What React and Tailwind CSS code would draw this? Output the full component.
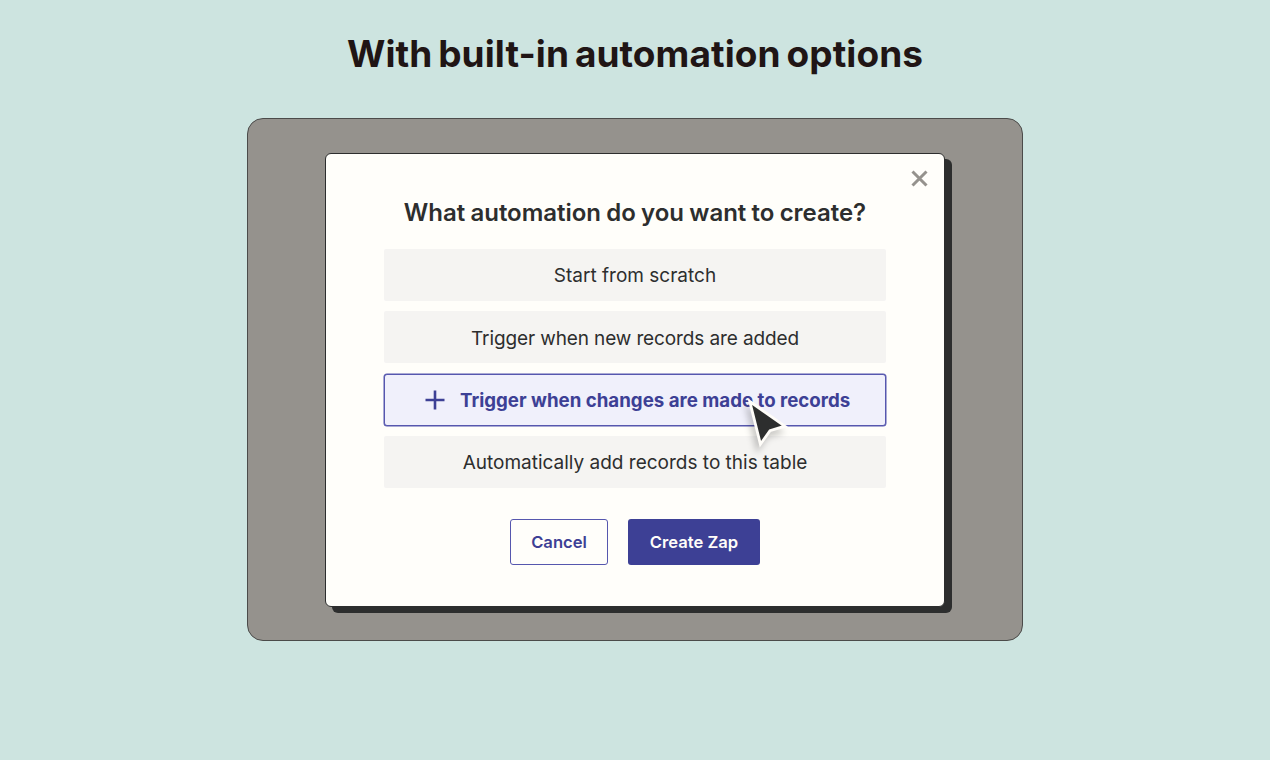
import React from 'react'

const options = [
  { id: 1, label: 'Start from scratch', spacing: 'tracking-[0px]' },
  { id: 2, label: 'Trigger when new records are added', spacing: 'tracking-[-0.12px]' },
  { id: 3, label: 'Trigger when changes are made to records', selected: true },
  { id: 4, label: 'Automatically add records to this table', spacing: 'tracking-[0px]' },
];

const Cursor = () => (
  <svg
    className="absolute left-[358px] top-[18px] overflow-visible drop-shadow-[-3px_6px_3px_rgba(0,0,0,0.2)]"
    width="48"
    height="58"
    viewBox="0 0 48 58"
    fill="none"
  >
    <path d="M6.8 8.5 41.8 33.2 27 37.6 17.4 51.2Z" fill="#2d2e2e" stroke="#fffdf9" strokeWidth="2.8" />
  </svg>
);

const App = () => {
  return (
    <div className="flex h-[760px] w-[1270px] flex-col items-center overflow-hidden bg-[#cde4e0] font-['Inter',sans-serif]">
      <h1 className="mt-[29px] h-[50px] whitespace-nowrap text-[37px] font-bold leading-[50px] tracking-[0.08px] text-[#201515] [word-spacing:-3px]">
        With built-in automation options
      </h1>

      {/* Backdrop */}
      <div className="mt-[39px] h-[523px] w-[776px] rounded-[16px] border border-[#4b4b4a] bg-[#95928d] pl-[77px] pt-[34px]">
        {/* Modal */}
        <div className="flex h-[454px] w-[620px] flex-col items-center rounded-[6px] border border-[#2d2e2e] bg-[#fffefa] shadow-[7px_6px_0_0_#2d2e2e]">
          <div className="flex w-full justify-end pr-[16px] pt-[16px]">
            <button aria-label="Close">
              <svg width="17" height="17" viewBox="0 0 17 17" fill="none" stroke="#95928d" strokeWidth="3">
                <path d="M1.5 1.5l14 14M15.5 1.5l-14 14" />
              </svg>
            </button>
          </div>

          <h2 className="mt-[10px] whitespace-nowrap text-[24px] font-semibold leading-[32px] tracking-[-0.03px] text-[#2d2e2e] [word-spacing:-0.7px]">
            What automation do you want to create?
          </h2>

          <div className="mt-[20px] flex w-[502px] flex-col gap-[10.4px]">
            {options.map((option) =>
              option.selected ? (
                <div
                  key={option.id}
                  className="relative flex h-[52px] items-center rounded-[3px] border-[1.5px] border-[#5657ae] bg-[#f0f0fb] pl-[40px] shadow-[0_0_0_0.5px_#5657ae]"
                >
                  <svg width="20" height="20" viewBox="0 0 20 20" fill="none" stroke="#3d4095" strokeWidth="2.6">
                    <path d="M10 .5v19M.5 10h19" />
                  </svg>
                  <span className="ml-[15px] whitespace-nowrap pt-[2px] text-[18.7px] font-bold tracking-[0px] text-[#3d4095]">
                    {option.label}
                  </span>
                  <Cursor />
                </div>
              ) : (
                <div
                  key={option.id}
                  className="flex h-[52px] items-center justify-center rounded-[2px] bg-[#f5f4f2] pt-[3px] text-[19px] text-[#2d2e2e]"
                >
                  <span className={`whitespace-nowrap ${option.spacing}`}>{option.label}</span>
                </div>
              )
            )}
          </div>

          <div className="mt-[31px] flex gap-[20px]">
            <button className="h-[46px] w-[98px] rounded-[3px] border border-[#5657ae] pt-[1px] text-[16.6px] font-semibold text-[#3d4095]">
              Cancel
            </button>
            <button className="h-[46px] w-[132px] rounded-[3px] bg-[#3d4095] pt-[1px] text-[16.6px] font-semibold text-[#fffdf9]">
              Create Zap
            </button>
          </div>
        </div>
      </div>
    </div>
  );
};

export default App
